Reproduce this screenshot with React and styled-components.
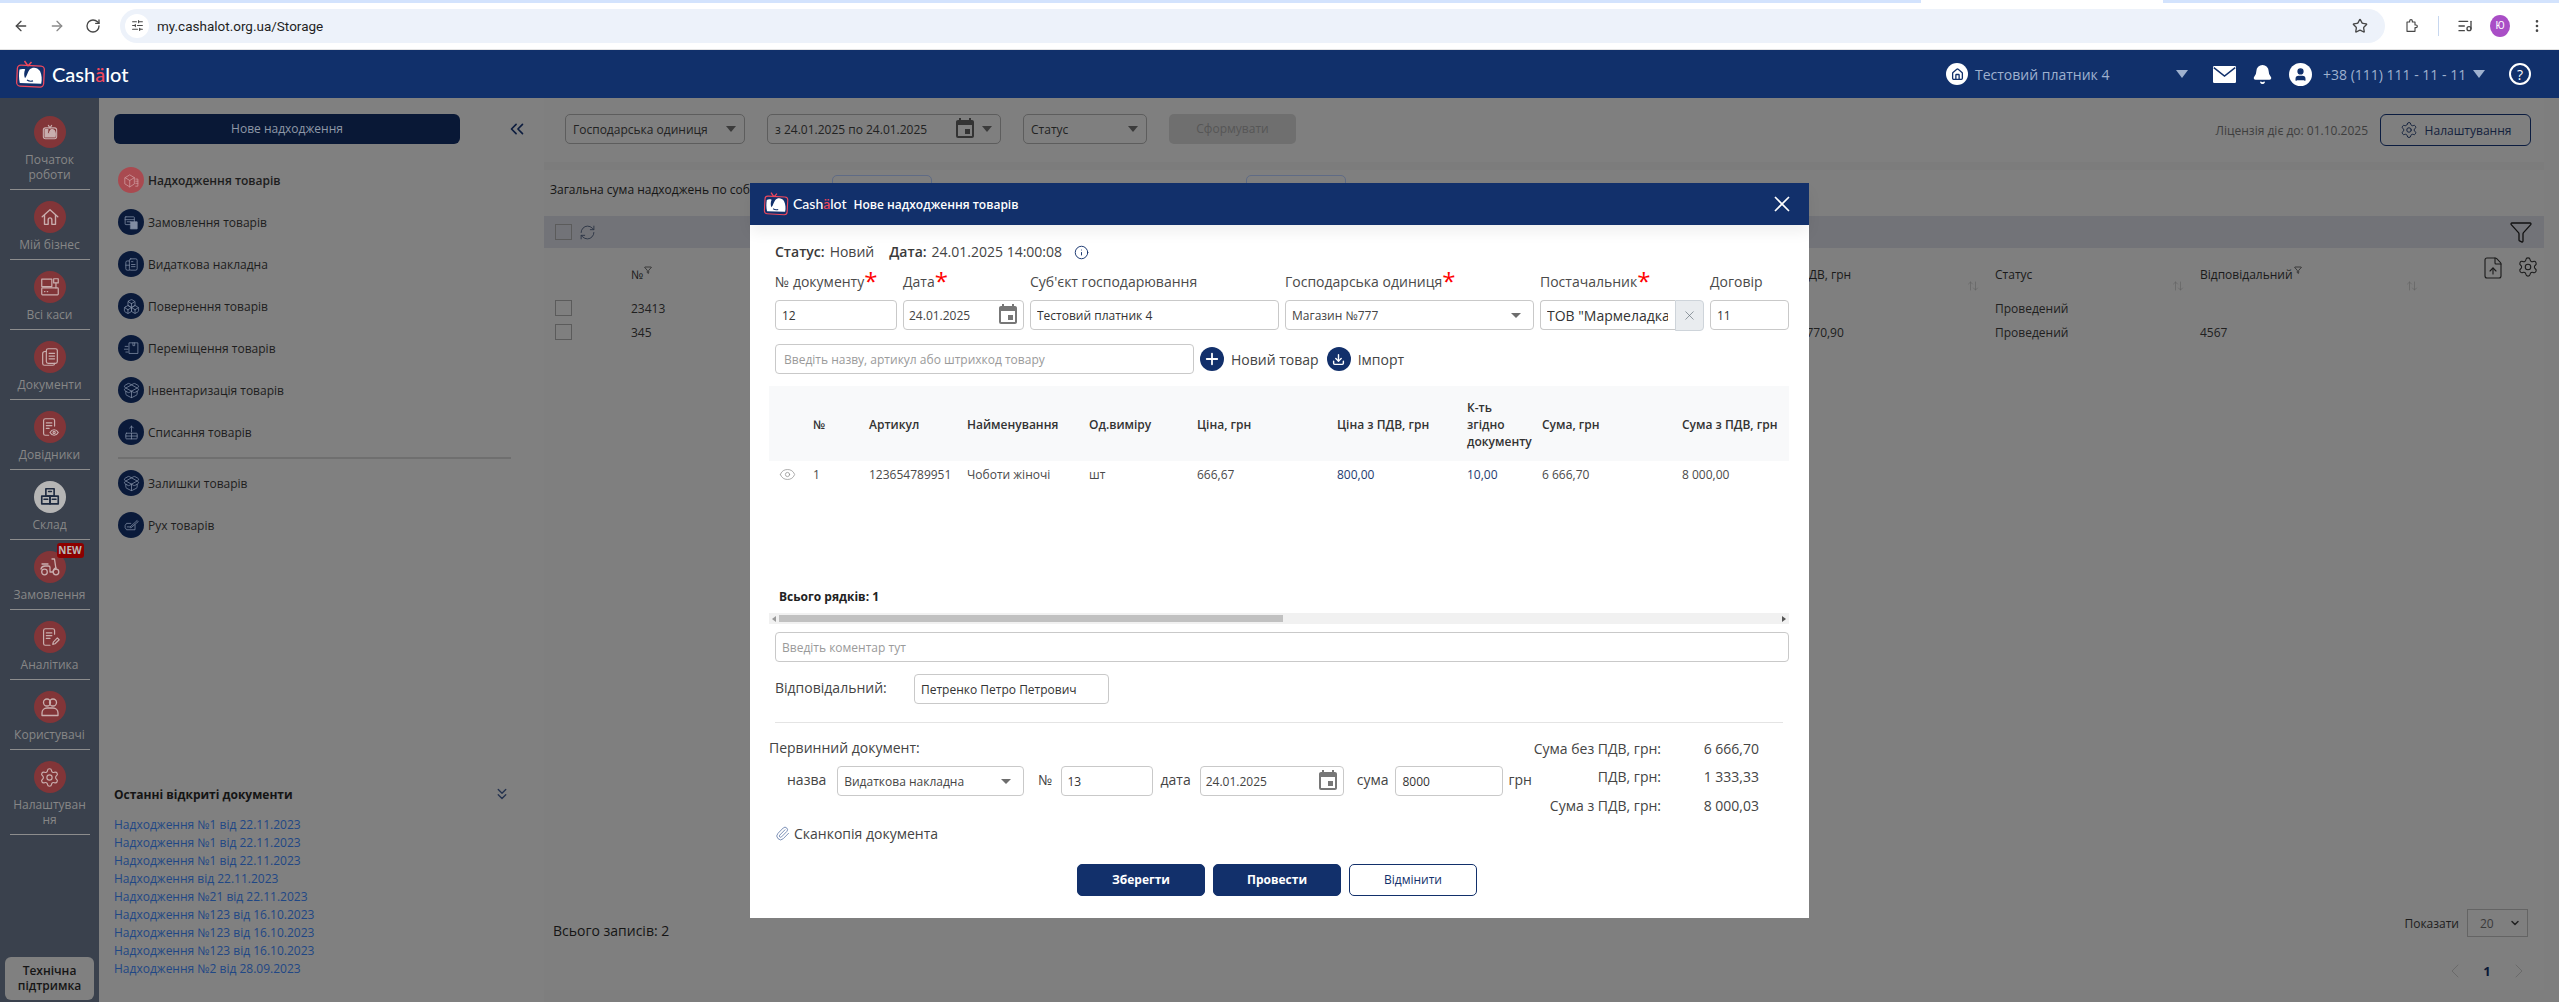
import React from "react";
import styled, { createGlobalStyle } from "styled-components";
import {
  ArrowLeft, ArrowRight, RotateCw, SlidersHorizontal, Star, ListMusic, MoreVertical,
  Bell, User, Home, Settings, ChevronsLeft, ChevronsDown, RefreshCw, Filter, FileUp,
  ArrowUpDown, Info, X, Plus, Download, Eye, Paperclip, ChevronDown, ChevronLeft, ChevronRight,
  Boxes, PackageOpen,
} from "lucide-react";
import { MdEvent } from "react-icons/md";

const Global = createGlobalStyle`
  html, body { margin: 0; padding: 0; background: #808080; overflow: hidden; }
  * { box-sizing: border-box; }
  body { font-family: "Open Sans", "Noto Sans", sans-serif; }
`;

const Page = styled.div`
  position: relative; width: 2559px; height: 1002px; overflow: hidden; display: flex; flex-direction: column;
`;

/* ---------- browser chrome ---------- */
const TabStrip = styled.div`height: 3px; background: #d3e3fd; display: flex;`;
const ActiveTab = styled.div`margin-left: 1921px; width: 242px; background: #fff;`;
const Toolbar = styled.div`
  height: 47px; background: #fff; border-bottom: 1px solid #e3e3e3; display: flex; align-items: center;
  padding-left: 13px; color: #474747; padding-bottom: 1px;
`;
const NavIcon = styled.span`
  display: inline-flex; width: 16px; margin-left: ${p => p.$ml || 0}px; margin-right: ${p => p.$mr || 0}px;
  color: ${p => p.$color || "#474747"};
`;
const AddressBar = styled.div`
  width: 2265px; margin-left: 19px; height: 34px; background: #edf2fa; border-radius: 17px;
  display: flex; align-items: center; padding: 0 17px 0 5px;
`;
const SitePill = styled.span`
  width: 24px; height: 24px; border-radius: 50%; background: #fff; display: inline-flex; align-items: center;
  justify-content: center; margin-right: 8px; color: #474747;
`;
const Url = styled.span`font: 400 13.5px Roboto, sans-serif; color: #1f1f1f; flex: 1;`;
const ToolDivider = styled.span`width: 1px; height: 20px; background: #c7d7ef; margin-left: 19px;`;
const Avatar = styled.span`
  width: 20px; height: 22px; border-radius: 50%; background: #a94ec6; color: #fff; margin-left: 17px;
  font: 400 10px Roboto, sans-serif; display: inline-flex; align-items: center; justify-content: center;
`;

/* ---------- app header ---------- */
const AppHeader = styled.header`
  height: 48px; background: #11306b; display: flex; align-items: center; padding: 0 28px 0 15px; color: #fff;
`;
const Brand = styled.span`
  display: inline-flex; align-items: center; gap: ${p => p.$gap}px; color: #fff;
  font: 500 ${p => p.$size}px/1 Lato, sans-serif;
`;
const BrandAccent = styled.span`color: #f0485c;`;
const HeaderRight = styled.div`margin-left: auto; display: flex; align-items: center;`;
const HeadCircle = styled.span`
  width: ${p => p.$size || 22}px; height: ${p => p.$size || 22}px; border-radius: 50%; background: #fff; color: #11306b;
  display: inline-flex; align-items: center; justify-content: center; margin-left: ${p => p.$ml || 0}px; flex: none;
`;
const TenantName = styled.span`width: 201px; margin-left: 7px; font-size: 14px; color: #9fb1cf; white-space: nowrap;`;
const PhoneText = styled.span`margin-left: 11px; width: 150px; font-size: 14px; color: #9fb1cf; white-space: nowrap;`;
const HeadCaret = styled.span`
  width: 0; height: 0; border-left: 6px solid transparent; border-right: 6px solid transparent;
  border-top: 8px solid #9fb1cf; margin-left: ${p => p.$ml || 0}px;
`;
const HeadGlyph = styled.span`display: inline-flex; margin-left: ${p => p.$ml}px; color: #fff;`;
const HelpCircle = styled.span`
  width: 22px; height: 22px; border: 2px solid #fff; border-radius: 50%; margin-left: 24px; display: inline-flex;
  align-items: center; justify-content: center; font-size: 14px; color: #fff;
`;

/* ---------- workspace ---------- */
const Workspace = styled.div`display: flex; flex: 1; min-height: 0; background: #7e7e7e;`;
const Sidebar = styled.nav`
  width: 99px; flex: none; background: #3a414d; display: flex; flex-direction: column; align-items: center; padding-bottom: 2px;
`;
const SideItem = styled.div`
  width: 80px; padding: ${p => (p.$first ? 18 : 11)}px 0 7px; border-bottom: 1px solid #8d8d8d; display: flex;
  flex-direction: column; align-items: center; position: relative;
`;
const SideIcon = styled.span`
  width: 32px; height: 32px; border-radius: 50%; background: ${p => (p.$active ? "#b5b5b5" : "#823538")};
  color: ${p => (p.$active ? "#1e2a40" : "#c9aeae")}; display: flex; align-items: center; justify-content: center; margin-bottom: 4px;
`;
const SideLabel = styled.span`
  font-size: 12px; line-height: 15px; color: #878787; text-align: center; width: 80px; overflow-wrap: anywhere;
`;
const NewBadge = styled.span`
  position: absolute; left: 47px; top: 3px; width: 27px; height: 15px; background: #8c0000; border-radius: 3px;
  color: #b9b9b9; font-size: 10px; font-weight: 700; line-height: 15px; text-align: center;
`;
const SupportButton = styled.div`
  margin-top: auto; width: 89px; height: 43px; border-radius: 6px; background: #808080; color: #151515;
  font-size: 12px; font-weight: 600; line-height: 15px; text-align: center; padding-top: 6px;
`;

const LeftPanel = styled.aside`
  width: 445px; flex: none; background: #808080; padding: 16px 0 24px 15px; display: flex; flex-direction: column;
`;
const PanelTop = styled.div`display: flex; align-items: center; color: #0d1d3f;`;
const NewButton = styled.div`
  width: 346px; height: 30px; border-radius: 6px; background: #091836; color: #8f98a8; font-size: 12px; line-height: 30px;
  text-align: center; margin-right: 46px;
`;
const MenuList = styled.div`margin-top: 15px;`;
const MenuItem = styled.div`
  height: 42px; display: flex; align-items: center; padding-left: 4px; gap: 4px; font-size: 12px; color: #1d1d1d;
  font-weight: ${p => (p.$active ? 600 : 400)};
`;
const MenuIcon = styled.span`
  width: 26px; height: 26px; border-radius: 50%; display: flex; align-items: center; justify-content: center;
  background: ${p => (p.$active ? "#a94a50" : "#0a1a3a")}; color: ${p => (p.$active ? "#cf9a9e" : "#808ca3")};
`;
const MenuDivider = styled.div`width: 393px; height: 2px; margin: 4px 0 3px 4px; background: #6f6f6f;`;
const Recent = styled.div`margin-top: auto; width: 397px;`;
const RecentTitle = styled.div`
  display: flex; justify-content: space-between; align-items: center; height: 20px; margin-bottom: 12px;
  font-size: 12px; font-weight: 700; color: #141414;
`;
const RecentLink = styled.div`font-size: 12px; line-height: 18px; color: #1f4785;`;

const Main = styled.main`width: 2000px; height: 892px; flex: none; display: flex; flex-direction: column; background: #7c7c7c;`;
const FilterRow = styled.div`
  height: 64px; background: #7f7f7f; padding: 16px 13px 0 21px; display: flex; align-items: flex-start; gap: 22px; margin-bottom: 8px;
`;
const FilterBox = styled.div`
  width: ${p => p.$w}px; height: 30px; border: 1px solid #5d5d5d; border-radius: 5px; display: flex; align-items: center;
  justify-content: space-between; padding: 0 8px 0 7px; font-size: 12px; color: #222; white-space: nowrap;
`;
const DimCaret = styled.span`
  width: 0; height: 0; border-left: 5px solid transparent; border-right: 5px solid transparent; border-top: 6px solid #3b3b3b;
  margin-left: ${p => p.$ml || 0}px;
`;
const DateBits = styled.span`display: flex; align-items: center; color: #333;`;
const FormButton = styled.div`
  width: 127px; height: 30px; border-radius: 5px; background: #6f6f6f; color: #565656; font-size: 12px; line-height: 30px; text-align: center;
`;
const LicenseGroup = styled.div`margin-left: auto; display: flex; align-items: center; gap: 12px; height: 32px; font-size: 12px; color: #3e3e3e;`;
const SettingsButton = styled.div`
  width: 151px; height: 32px; border: 1px solid #0b1c40; border-radius: 6px; display: flex; align-items: center; justify-content: center;
  gap: 7px; font-size: 12px; color: #13213d;
`;
const SummaryRow = styled.div`
  height: 46px; background: #7f7f7f; padding: 5px 0 0 6px; display: grid; grid-template-columns: 282px 100px 314px 100px; font-size: 12px; color: #151515;
`;
const SummaryText = styled.span`line-height: 30px; white-space: nowrap;`;
const SummaryInput = styled.span`height: 30px; border: 1px solid #5f6b85; border-radius: 5px;`;
const ActionBar = styled.div`
  height: 32px; background: #727378; padding: 0 11px; display: flex; align-items: center; color: #2c3445;
`;
const Check = styled.span`width: 17px; height: 16px; border: 1px solid #5b5b5b; display: block; flex: none;`;
const RefreshGlyph = styled.span`display: inline-flex; margin-left: 7px;`;
const BarSpacer = styled.span`flex: 1;`;
const ListArea = styled.div`flex: 1; background: #7f7f7f; position: relative;`;
const ListGrid = styled.div`
  display: grid; grid-template-columns: 87px 1128px 236px 205px 234px 110px; font-size: 12px; color: #202020;
  height: ${p => p.$h}px; align-items: ${p => (p.$head ? "stretch" : "center")};
`;
const ListCheckCell = styled.div`padding-left: 11px;`;
const ListHead = styled.div`
  display: flex; justify-content: space-between; padding: 18px 16px 0 0; line-height: 18px; position: relative; white-space: nowrap; color: #1a1a1a;
`;
const HeadTitle = styled.span`display: inline-flex; align-items: flex-start; gap: 1px;`;
const SortMark = styled.span`display: inline-flex; align-self: flex-end; color: #5f5f5f; padding-bottom: 4px;`;
const ListTools = styled.div`display: flex; gap: 12px; color: #1b1b1b; padding: 8px 0 0 47px;`;
const Footer = styled.div`height: 81px; background: #7f7f7f; display: flex; justify-content: space-between; padding: 0 16px 0 9px;`;
const TotalRecords = styled.div`font-size: 14px; line-height: 20px; padding-top: 12px; color: #151515;`;
const FooterRight = styled.div`display: flex; flex-direction: column; align-items: flex-end;`;
const ShowRow = styled.div`display: flex; align-items: center; gap: 8px; font-size: 12px; color: #1d1d1d;`;
const ShowSelect = styled.div`
  width: 61px; height: 28px; border: 1px solid #646464; display: flex; align-items: center; justify-content: space-between;
  padding: 0 6px 0 12px; color: #3a3a3a;
`;
const Pager = styled.div`
  margin-top: 22px; width: 88px; margin-right: -3px; display: flex; align-items: center; justify-content: space-between; color: #6a6a6a;
`;
const PageNumber = styled.span`font-size: 13px; font-weight: 700; color: #0a1836;`;

/* ---------- dialog ---------- */
const Dialog = styled.section`
  position: absolute; left: 750px; top: 183px; width: 1059px; height: 735px; background: #fff; display: flex; flex-direction: column;
`;
const DialogHead = styled.div`
  height: 42px; background: #12306b; box-shadow: 0 8px 14px rgba(0,0,0,.06); display: flex; align-items: center; padding: 0 14px 0 13px; color: #fff;
`;
const DialogTitle = styled.span`font-size: 12px; font-weight: 600; margin-left: 7px;`;
const CloseGlyph = styled.span`margin-left: auto; display: inline-flex;`;
const DialogBody = styled.div`padding: 17px 20px 0 25px; display: flex; flex-direction: column; color: #444;`;
const StatusRow = styled.div`display: flex; align-items: center; font-size: 14px; line-height: 20px; color: #444; height: 20px;`;
const StatusKey = styled.b`font-weight: 600; margin-right: 5px; margin-left: ${p => p.$ml || 0}px; color: #3a3a3a;`;
const InfoGlyph = styled.span`display: inline-flex; margin-left: 12px; color: #12306b;`;
const FieldGrid = styled.div`
  margin-top: 10px; display: grid; grid-template-columns: 122px 121px 249px 249px 164px 79px; column-gap: 6px; row-gap: 8px;
`;
const FieldLabel = styled.span`font-size: 14px; line-height: 20px; color: #4a4a4a; white-space: nowrap; display: flex;`;
const Star2 = styled.span`color: #f00; font-size: 24px; line-height: 20px; height: 20px; margin-top: -1px;`;
const Input = styled.input`
  width: ${p => (p.$w ? `${p.$w}px` : "100%")}; height: 30px; border: 1px solid #c9c9c9; border-radius: 4px; padding: 0 6px;
  font: 400 ${p => p.$fs || 12}px "Open Sans", sans-serif; color: #333; outline: none; background: #fff; flex: none; min-width: 0;
  &::placeholder { color: #9a9a9a; opacity: 1; }
`;
const DateBox = styled.div`
  width: ${p => (p.$w ? `${p.$w}px` : "100%")}; height: 30px; border: 1px solid #c9c9c9; border-radius: 4px; display: flex; align-items: center;
  justify-content: space-between; padding: 0 3px 0 5px; font-size: 12px; color: #444; flex: none;
`;
const CalendarGlyph = styled.span`display: inline-flex; color: #777;`;
const SelectBox = styled.div`
  width: ${p => (p.$w ? `${p.$w}px` : "100%")}; height: 30px; border: 1px solid #c9c9c9; border-radius: 4px; display: flex; align-items: center;
  justify-content: space-between; padding: 0 ${p => p.$pr || 12}px 0 6px; font-size: 12px; color: #444; flex: none;
`;
const GreyCaret = styled.span`
  width: 0; height: 0; border-left: 5px solid transparent; border-right: 5px solid transparent; border-top: 5px solid #6d6d6d;
`;
const SupplierBox = styled.div`display: flex; height: 31px;`;
const SupplierInput = styled(Input)`
  flex: 1; width: 135px; font-size: 14px; border-radius: 4px 0 0 4px; border-right: 0; padding-right: 7px; text-overflow: clip;
`;
const ClearButton = styled.span`
  width: 29px; flex: none; background: #e9ecef; border: 1px solid #ced4da; border-radius: 0 4px 4px 0; display: flex; align-items: center;
  justify-content: center; color: #5c6670;
`;
const SearchRow = styled.div`margin-top: 13px; display: flex; align-items: center; font-size: 14px; color: #444;`;
const SearchInput = styled(Input)`width: 419px; padding-left: 8px;`;
const RoundButton = styled.span`
  width: 24px; height: 24px; border-radius: 50%; background: #12306b; color: #fff; display: inline-flex; align-items: center;
  justify-content: center; margin-left: ${p => p.$ml}px; margin-right: 7px; flex: none;
`;
const ProductTable = styled.div`margin: 12px 0 0 -6px; width: 1020px; height: 238px; display: flex; flex-direction: column;`;
const ProductGrid = styled.div`
  display: grid; grid-template-columns: 44px 56px 98px 122px 108px 140px 130px 75px 140px 107px; align-items: center; font-size: 12px;
  height: ${p => p.$h}px; ${p => p.$head && "background: #f8f9fa; font-weight: 600; color: #333; line-height: 17px;"}
  ${p => !p.$head && "color: #4a4a4a;"}
`;
const HeadCell = styled.span`padding-top: 2px;`;
const EyeCell = styled.span`display: inline-flex; padding-left: 10px; color: #8b8b8b;`;
const BlueValue = styled.span`color: #1d3b70;`;
const RowsTotal = styled.div`margin-top: auto; padding-left: 10px; font-size: 12px; line-height: 16px; font-weight: 700; color: #222;`;
const ScrollBar = styled.div`
  margin-top: 8px; height: 11px; background: #f1f1f1; display: flex; align-items: center; padding: 0 3px; justify-content: space-between;
`;
const ScrollLeft = styled.div`display: flex; align-items: center; gap: 3px;`;
const ScrollArrow = styled.span`
  width: 0; height: 0; border-top: 3px solid transparent; border-bottom: 3px solid transparent;
  ${p => (p.$right ? "border-left: 4px solid #555;" : "border-right: 4px solid #999;")}
`;
const ScrollThumb = styled.span`width: 504px; height: 7px; background: #c1c1c1;`;
const CommentInput = styled(Input)`margin-top: 8px; width: 1014px;`;
const ResponsibleRow = styled.div`margin-top: 12px; display: flex; align-items: center; font-size: 14px; color: #444; height: 30px;`;
const ResponsibleLabel = styled.span`width: 139px; margin-top: -4px;`;
const Rule = styled.hr`margin: 18px 6px 0 0; border: 0; border-top: 1px solid #e4e4e4; width: 1008px;`;
const LowerBlock = styled.div`display: flex; margin-top: 11px;`;
const PrimaryDoc = styled.div`margin-left: -6px; width: 761px; padding-top: 4px; font-size: 14px; color: #444;`;
const PrimaryTitle = styled.div`line-height: 20px; height: 20px;`;
const PrimaryRow = styled.div`margin-top: 8px; display: flex; align-items: center; padding-left: 18px;`;
const InlineLabel = styled.span`
  margin-left: ${p => p.$ml || 0}px; margin-right: ${p => p.$mr || 0}px; margin-top: -3px; flex: none;
`;
const Totals = styled.div`display: grid; grid-template-columns: 131px 98px; grid-auto-rows: 28.5px; align-items: center; font-size: 14px; color: #444;`;
const TotalKey = styled.span`text-align: right; white-space: nowrap;`;
const TotalValue = styled.span`text-align: right;`;
const ScanRow = styled.div`margin-top: 4px; height: 20px; display: flex; align-items: center; gap: 4px; font-size: 14px; color: #444;`;
const ClipGlyph = styled.span`display: inline-flex; color: #5f78a6;`;
const ButtonRow = styled.div`margin-top: 20px; padding-left: 302px; display: flex; gap: 8px;`;
const ActionButton = styled.div`
  width: 128px; height: 32px; border-radius: 5px; font-size: 12px; line-height: 30px; text-align: center; font-weight: ${p => (p.$ghost ? 400 : 700)};
  border: 1px solid #12306b; background: ${p => (p.$ghost ? "#fff" : "#12306b")}; color: ${p => (p.$ghost ? "#12306b" : "#fff")};
`;

/* ---------- drawings ---------- */
const Ico = ({ size = 20, w = 1.3, children }) => (
  <svg width={size} height={size} viewBox="0 0 24 24" fill="none" stroke="currentColor" strokeWidth={w} strokeLinecap="round" strokeLinejoin="round">{children}</svg>
);
const LogoMark = ({ size = 32 }) => (
  <svg width={size} height={size * 0.94} viewBox="0 0 32 30">
    <path d="M13 7 9.5 2M13 7l3.5-4" stroke="#f0485c" strokeWidth="1.5" fill="none" />
    <rect x="2" y="6.5" width="27" height="21" rx="3.5" fill="none" stroke="#f0485c" strokeWidth="1.3" transform="rotate(3 15 17)" />
    <path d="M4.5 10.5c-.7 4-.7 9 .3 13.5l21.4.6c1-4 .6-9-1.2-12.6-2.6-4-7.6-4.4-10.4-1.5-2.2 2.8-2.4 6.5-4.6 8.6-1.2-2.4-1-6 .2-8.8-1.800-.6-4-.6-5.700.2z" fill="#fff" />
    <path d="M12 21c2 1.400 4 1.500 6 .8" stroke="#11306b" strokeWidth="1.2" fill="none" />
  </svg>
);
const MailGlyph = () => (
  <svg width="23" height="17" viewBox="0 0 23 17">
    <rect width="23" height="17" rx="1.2" fill="#fff" />
    <path d="M.8 1.600 11.500 10 22.200 1.600" fill="none" stroke="#11306b" strokeWidth="1.500" />
  </svg>
);
const PuzzleGlyph = () => (
  <Ico size={18} w={1.7}>
    <path d="M7 6h4V4.500a2 2 0 0 1 4 0V6h4v4.500h1.500a2 2 0 0 1 0 4H19V20H7z" transform="translate(-1 0)" />
  </Ico>
);
const BrandText = () => <span>Cash<BrandAccent>ä</BrandAccent>lot</span>;

const Draw = {
  start: <Ico><path d="M12 7 10 4M12 7l2-3" /><rect x="4" y="7" width="16" height="13" rx="2.500" /><path d="M6 9v9h12c.8-3 .4-6-1-8-2-1.600-4-1-5 1-.6 2-1 3-2 4-1-1-1-4-.5-6z" fill="currentColor" /></Ico>,
  home: <Ico size={22} w={1.5}><path d="M3.500 11.800 12 4l8.500 7.800" /><path d="M6 10v10h4v-5a2 2 0 0 1 4 0v5h4V10" /></Ico>,
  cash: <Ico size={22}><rect x="3" y="3.500" width="11" height="8" /><rect x="16" y="3" width="5" height="4.500" /><path d="M18.500 7.500V13" /><rect x="3" y="13" width="18" height="7.500" rx=".8" /><path d="M6 17h.5M9 17h.5" /></Ico>,
  docs: <Ico size={22}><rect x="8" y="3" width="12" height="16" rx="2" /><path d="M8 6H6.500A2.500 2.500 0 0 0 4 8.500V19a2 2 0 0 0 2 2h9a2 2 0 0 0 2-2" /><path d="M11 8h6M11 11h6M11 14h6" /></Ico>,
  refs: <Ico size={22}><path d="M17 11V5a2 2 0 0 0-2-2H7a2 2 0 0 0-2 2v14a2 2 0 0 0 2 2h3.500" /><path d="M8 7.500h6M8 10.500h6M8 13.500h3" /><path d="M12 18c1.200-2.200 3-3 4.500-3s3.300.8 4.500 3c-1.200 2.200-3 3-4.500 3s-3.300-.8-4.500-3z" /><circle cx="16.500" cy="18" r="1.200" /></Ico>,
  store: <Ico size={22} w={1.8}><rect x="7.500" y="3" width="9" height="8" /><rect x="3" y="11" width="9" height="8.500" /><rect x="12" y="11" width="9" height="8.500" /><path d="M10.500 6h3M5.500 14.500h4M14.500 14.500h4" /></Ico>,
  scooter: <Ico size={24}><circle cx="6.500" cy="17" r="2.800" /><circle cx="18" cy="17" r="2.800" /><path d="M14 4h2.500L18 14.200" /><path d="M3 14c.5-2 2-3 4-3h3.500c1 0 1.500.7 1.500 1.500V17h3c.3-2 1-3.500 3-4" /><path d="M4 9h6" /></Ico>,
  analytics: <Ico size={22}><path d="M17 9V5a2 2 0 0 0-2-2H7a2 2 0 0 0-2 2v14a2 2 0 0 0 2 2h5" /><path d="M8 7.500h6M8 10.500h6M8 13.500h4" /><path d="m15 20 .6-2.500 4.400-4.500 2 2-4.500 4.400z" /></Ico>,
  users: <Ico size={24}><circle cx="9" cy="7.500" r="3.500" /><circle cx="15" cy="7.500" r="3.500" /><path d="M4 20.500V18c0-2.800 2.200-5 5-5h6c2.800 0 5 2.200 5 5v2.500z" /></Ico>,
  settings: <Settings size={21} strokeWidth={1.3} />,
};
const Mini = {
  receipt: <Ico size={17} w={1.1}><path d="m3 8 6.500-4L16 8v9l-6.500 4L3 17z" /><path d="m3 8 6.500 4L16 8M9.500 12v9" /><path d="M18 10h3v10h-3M18 13h3M18 16h3" /></Ico>,
  orders: <Ico size={17} w={1.1}><rect x="3" y="4" width="13" height="11" rx="1" /><path d="M3 8h13M6 11h5" /><rect x="11" y="11" width="9" height="10" fill="currentColor" /></Ico>,
  invoice: <Ico size={17} w={1.1}><rect x="9" y="4" width="11" height="16" rx="2" /><path d="M9 7H6a2 2 0 0 0-2 2v9a2 2 0 0 0 2 2h3M12 8h2M12 12h5M12 15h5M4 13h5" /></Ico>,
  returns: <Boxes size={17} strokeWidth={1.1} />,
  move: <Ico size={17} w={1.1}><rect x="9" y="4" width="12" height="15" /><path d="M14 4v4h2.500V4M3 9h4M2 13h5M4 17h3" /></Ico>,
  stock: <PackageOpen size={17} strokeWidth={1.1} />,
  writeoff: <Ico size={17} w={1.1}><rect x="4" y="13" width="16" height="8" rx="1" /><path d="M4 17h16M12 13v8M12 11V3M9.500 5.500 12 3l2.500 2.500" /></Ico>,
  flow: <Ico size={17} w={1.1}><path d="M17 11v7H5l-2-3v-3l2-3h6" /><path d="m10 14 10-9 1.500 1.500L11.500 15z" /><path d="M6 14h3" /></Ico>,
};

const sideItems = [
  ["Початок роботи", Draw.start, { first: true }],
  ["Мій бізнес", Draw.home],
  ["Всі каси", Draw.cash],
  ["Документи", Draw.docs],
  ["Довідники", Draw.refs],
  ["Склад", Draw.store, { active: true }],
  ["Замовлення", Draw.scooter, { badge: true }],
  ["Аналітика", Draw.analytics],
  ["Користувачі", Draw.users],
  ["Налаштування", Draw.settings],
];
const menuTop = [
  ["Надходження товарів", Mini.receipt, true],
  ["Замовлення товарів", Mini.orders],
  ["Видаткова накладна", Mini.invoice],
  ["Повернення товарів", Mini.returns],
  ["Переміщення товарів", Mini.move],
  ["Інвентаризація товарів", Mini.stock],
  ["Списання товарів", Mini.writeoff],
];
const menuBottom = [["Залишки товарів", Mini.stock], ["Рух товарів", Mini.flow]];
const recentDocs = [
  "Надходження №1 від 22.11.2023", "Надходження №1 від 22.11.2023", "Надходження №1 від 22.11.2023",
  "Надходження від 22.11.2023", "Надходження №21 від 22.11.2023", "Надходження №123 від 16.10.2023",
  "Надходження №123 від 16.10.2023", "Надходження №123 від 16.10.2023", "Надходження №2 від 28.09.2023",
];
const Req = () => <Star2>*</Star2>;

export default function App() {
  return (
    <Page>
      <Global />
      <TabStrip><ActiveTab /></TabStrip>
      <Toolbar>
        <NavIcon><ArrowLeft size={16} /></NavIcon>
        <NavIcon $ml={20} $color="#8a8a8a"><ArrowRight size={16} /></NavIcon>
        <NavIcon $ml={20}><RotateCw size={16} /></NavIcon>
        <AddressBar>
          <SitePill><SlidersHorizontal size={13} /></SitePill>
          <Url>my.cashalot.org.ua/Storage</Url>
          <NavIcon><Star size={16} /></NavIcon>
        </AddressBar>
        <NavIcon $ml={18}><PuzzleGlyph /></NavIcon>
        <ToolDivider />
        <NavIcon $ml={18}><ListMusic size={16} /></NavIcon>
        <Avatar>Ю</Avatar>
        <NavIcon $ml={19}><MoreVertical size={16} /></NavIcon>
      </Toolbar>

      <AppHeader>
        <Brand $gap={5} $size={20}><LogoMark /><BrandText /></Brand>
        <HeaderRight>
          <HeadCircle><Home size={13} strokeWidth={2.4} /></HeadCircle>
          <TenantName>Тестовий платник 4</TenantName>
          <HeadCaret />
          <HeadGlyph $ml={25}><MailGlyph /></HeadGlyph>
          <HeadGlyph $ml={16}><Bell size={21} fill="#fff" /></HeadGlyph>
          <HeadCircle $size={23} $ml={16}><User size={15} fill="#11306b" /></HeadCircle>
          <PhoneText>+38 (111) 111 - 11 - 11</PhoneText>
          <HeadCaret />
          <HelpCircle>?</HelpCircle>
        </HeaderRight>
      </AppHeader>

      <Workspace>
        <Sidebar>
          {sideItems.map(([label, icon, o = {}]) => (
            <SideItem key={label} $first={o.first}>
              <SideIcon $active={o.active}>{icon}</SideIcon>
              {o.badge && <NewBadge>NEW</NewBadge>}
              <SideLabel>{label}</SideLabel>
            </SideItem>
          ))}
          <SupportButton>Технічна<br />підтримка</SupportButton>
        </Sidebar>

        <LeftPanel>
          <PanelTop>
            <NewButton>Нове надходження</NewButton>
            <ChevronsLeft size={22} strokeWidth={1.8} />
          </PanelTop>
          <MenuList>
            {menuTop.map(([label, icon, active]) => (
              <MenuItem key={label} $active={active}><MenuIcon $active={active}>{icon}</MenuIcon>{label}</MenuItem>
            ))}
            <MenuDivider />
            {menuBottom.map(([label, icon]) => (
              <MenuItem key={label}><MenuIcon>{icon}</MenuIcon>{label}</MenuItem>
            ))}
          </MenuList>
          <Recent>
            <RecentTitle>Останні відкриті документи <ChevronsDown size={18} color="#24324e" strokeWidth={1.8} /></RecentTitle>
            {recentDocs.map((d, i) => <RecentLink key={i}>{d}</RecentLink>)}
          </Recent>
        </LeftPanel>

        <Main>
          <FilterRow>
            <FilterBox $w={180}>Господарська одиниця <DimCaret /></FilterBox>
            <FilterBox $w={234}>з 24.01.2025 по 24.01.2025
              <DateBits><MdEvent size={24} /><DimCaret $ml={5} /></DateBits>
            </FilterBox>
            <FilterBox $w={124}>Статус <DimCaret /></FilterBox>
            <FormButton>Сформувати</FormButton>
            <LicenseGroup>
              Ліцензія діє до: 01.10.2025
              <SettingsButton><Settings size={18} strokeWidth={1.3} />Налаштування</SettingsButton>
            </LicenseGroup>
          </FilterRow>
          <SummaryRow>
            <SummaryText>Загальна сума надходжень по собівартості</SummaryText>
            <SummaryInput />
            <span />
            <SummaryInput />
          </SummaryRow>
          <ActionBar>
            <Check />
            <RefreshGlyph><RefreshCw size={17} strokeWidth={1.3} /></RefreshGlyph>
            <BarSpacer />
            <Filter size={24} strokeWidth={1.3} color="#111" />
          </ActionBar>
          <ListArea>
            <ListGrid $head $h={48}>
              <span />
              <ListHead><HeadTitle>№<Filter size={8} /></HeadTitle></ListHead>
              <ListHead>Сума з ПДВ, грн<SortMark><ArrowUpDown size={12} strokeWidth={1.2} /></SortMark></ListHead>
              <ListHead>Статус<SortMark><ArrowUpDown size={12} strokeWidth={1.2} /></SortMark></ListHead>
              <ListHead><HeadTitle>Відповідальний<Filter size={8} /></HeadTitle><SortMark><ArrowUpDown size={12} strokeWidth={1.2} /></SortMark></ListHead>
              <ListTools><FileUp size={24} strokeWidth={1.1} /><Settings size={22} strokeWidth={1.2} /></ListTools>
            </ListGrid>
            <ListGrid $h={24}>
              <ListCheckCell><Check /></ListCheckCell><span>23413</span><span /><span>Проведений</span><span /><span />
            </ListGrid>
            <ListGrid $h={24}>
              <ListCheckCell><Check /></ListCheckCell><span>345</span><span>123 345 770,90</span><span>Проведений</span><span>4567</span><span />
            </ListGrid>
          </ListArea>
          <Footer>
            <TotalRecords>Всього записів: 2</TotalRecords>
            <FooterRight>
              <ShowRow>Показати
                <ShowSelect>20 <ChevronDown size={12} strokeWidth={3} color="#222" /></ShowSelect>
              </ShowRow>
              <Pager>
                <ChevronLeft size={24} strokeWidth={1} />
                <PageNumber>1</PageNumber>
                <ChevronRight size={24} strokeWidth={1} />
              </Pager>
            </FooterRight>
          </Footer>
        </Main>
      </Workspace>

      <Dialog>
        <DialogHead>
          <Brand $gap={3} $size={14}><LogoMark size={27} /><BrandText /></Brand>
          <DialogTitle>Нове надходження товарів</DialogTitle>
          <CloseGlyph><X size={26} strokeWidth={1.6} /></CloseGlyph>
        </DialogHead>
        <DialogBody>
          <StatusRow>
            <StatusKey>Статус:</StatusKey>Новий
            <StatusKey $ml={15}>Дата:</StatusKey>24.01.2025 14:00:08
            <InfoGlyph><Info size={15} strokeWidth={1.5} /></InfoGlyph>
          </StatusRow>

          <FieldGrid>
            <FieldLabel>№ документу<Req /></FieldLabel>
            <FieldLabel>Дата<Req /></FieldLabel>
            <FieldLabel>Суб'єкт господарювання</FieldLabel>
            <FieldLabel>Господарська одиниця<Req /></FieldLabel>
            <FieldLabel>Постачальник<Req /></FieldLabel>
            <FieldLabel>Договір</FieldLabel>
            <Input readOnly value="12" />
            <DateBox>24.01.2025<CalendarGlyph><MdEvent size={24} /></CalendarGlyph></DateBox>
            <Input readOnly value="Тестовий платник 4" />
            <SelectBox>Магазин №777<GreyCaret /></SelectBox>
            <SupplierBox>
              <SupplierInput readOnly value={'ТОВ "Мармеладка"'} />
              <ClearButton><X size={15} strokeWidth={1} /></ClearButton>
            </SupplierBox>
            <Input readOnly value="11" />
          </FieldGrid>

          <SearchRow>
            <SearchInput readOnly placeholder="Введіть назву, артикул або штрихкод товару" />
            <RoundButton $ml={6}><Plus size={18} strokeWidth={2.4} /></RoundButton>Новий товар
            <RoundButton $ml={8}><Download size={13} strokeWidth={2.6} /></RoundButton>Імпорт
          </SearchRow>

          <ProductTable>
            <ProductGrid $head $h={75}>
              <span /><HeadCell>№</HeadCell><HeadCell>Артикул</HeadCell><HeadCell>Найменування</HeadCell><HeadCell>Од.виміру</HeadCell><HeadCell>Ціна, грн</HeadCell>
              <HeadCell>Ціна з ПДВ, грн</HeadCell><HeadCell>К-ть<br />згідно<br />документу</HeadCell><HeadCell>Сума, грн</HeadCell><HeadCell>Сума з ПДВ, грн</HeadCell>
            </ProductGrid>
            <ProductGrid $h={26}>
              <EyeCell><Eye size={17} strokeWidth={1} /></EyeCell><span>1</span><span>123654789951</span><span>Чоботи жіночі</span><span>шт</span><span>666,67</span>
              <BlueValue>800,00</BlueValue><BlueValue>10,00</BlueValue><span>6 666,70</span><span>8 000,00</span>
            </ProductGrid>
            <RowsTotal>Всього рядків: 1</RowsTotal>
            <ScrollBar>
              <ScrollLeft><ScrollArrow /><ScrollThumb /></ScrollLeft>
              <ScrollArrow $right />
            </ScrollBar>
          </ProductTable>

          <CommentInput readOnly placeholder="Введіть коментар тут" />
          <ResponsibleRow>
            <ResponsibleLabel>Відповідальний:</ResponsibleLabel>
            <Input $w={195} readOnly value="Петренко Петро Петрович" />
          </ResponsibleRow>
          <Rule />

          <LowerBlock>
            <PrimaryDoc>
              <PrimaryTitle>Первинний документ:</PrimaryTitle>
              <PrimaryRow>
                <InlineLabel $mr={11}>назва</InlineLabel>
                <SelectBox $w={187}>Видаткова накладна<GreyCaret /></SelectBox>
                <InlineLabel $ml={14} $mr={8}>№</InlineLabel>
                <Input $w={92} readOnly value="13" />
                <InlineLabel $ml={8} $mr={9}>дата</InlineLabel>
                <DateBox $w={144}>24.01.2025<CalendarGlyph><MdEvent size={24} /></CalendarGlyph></DateBox>
                <InlineLabel $ml={13} $mr={7}>сума</InlineLabel>
                <Input $w={108} readOnly value="8000" />
                <InlineLabel $ml={5}>грн</InlineLabel>
              </PrimaryRow>
            </PrimaryDoc>
            <Totals>
              <TotalKey>Сума без ПДВ, грн:</TotalKey><TotalValue>6 666,70</TotalValue>
              <TotalKey>ПДВ, грн:</TotalKey><TotalValue>1 333,33</TotalValue>
              <TotalKey>Сума з ПДВ, грн:</TotalKey><TotalValue>8 000,03</TotalValue>
            </Totals>
          </LowerBlock>

          <ScanRow><ClipGlyph><Paperclip size={15} strokeWidth={1.3} /></ClipGlyph>Сканкопія документа</ScanRow>

          <ButtonRow>
            <ActionButton>Зберегти</ActionButton>
            <ActionButton>Провести</ActionButton>
            <ActionButton $ghost>Відмінити</ActionButton>
          </ButtonRow>
        </DialogBody>
      </Dialog>
    </Page>
  );
}
